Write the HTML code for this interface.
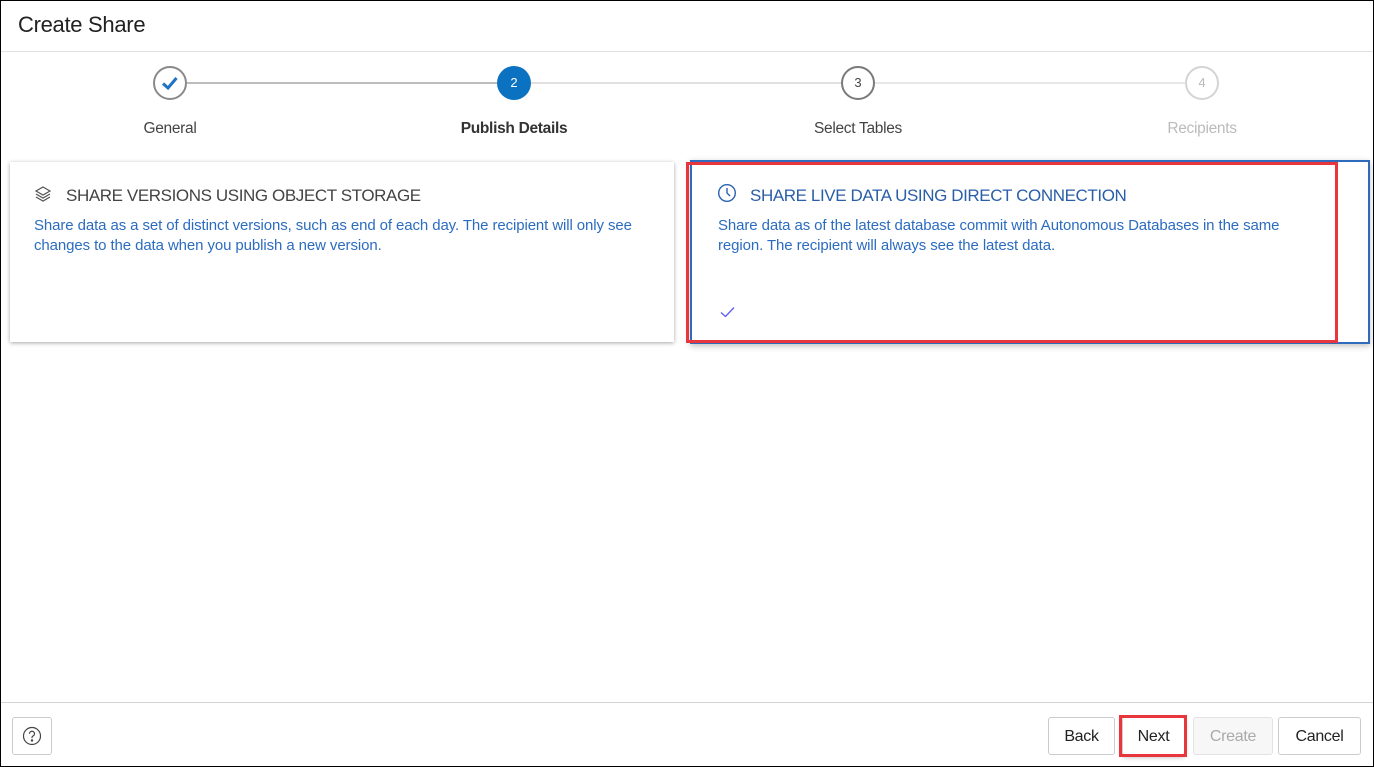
<!DOCTYPE html>
<html><head><style>
*{margin:0;padding:0;box-sizing:border-box}
body{width:1374px;height:767px;background:#fff;font-family:"Liberation Sans",sans-serif;position:relative;overflow:hidden}
.frame{position:absolute;left:0;top:0;width:1374px;height:767px;border:1px solid #000}
.abs{position:absolute}
.title{left:18px;top:12px;font-size:22px;color:#222;letter-spacing:-0.3px}
.hl{left:1px;right:1px;height:1px;background:#e2e2e2}
.line{height:2px;top:82px}
.circ{width:34px;height:34px;border-radius:50%;top:66px;text-align:center;line-height:30px;font-size:13px}
.lbl{top:120px;font-size:15.5px;width:200px;text-align:center;letter-spacing:-0.3px}
.card-t{font-size:17px;letter-spacing:-0.4px}
.card-d{font-size:15px;color:#2b6cc0;line-height:20px;letter-spacing:-0.1px;white-space:nowrap}
.btn{top:717px;height:38px;border:1px solid #ccc;border-radius:3px;background:#fff;font-size:16px;text-align:center;line-height:38px;color:#222;letter-spacing:-0.3px}
</style></head><body>
<div class="frame"></div>
<div class="abs title">Create Share</div>
<div class="abs hl" style="top:51px"></div>

<div class="abs line" style="left:187px;width:310px;background:#bdbdbd"></div>
<div class="abs line" style="left:531px;width:310px;background:#e0e0e0"></div>
<div class="abs line" style="left:875px;width:310px;background:#e8e8e8"></div>
<div class="abs circ" style="left:153px;border:2px solid #8a8a8a">
<svg width="30" height="30" viewBox="0 0 30 30"><path d="M8 15.5 L13 20 L21.5 10" fill="none" stroke="#1f73c6" stroke-width="3"/></svg></div>
<div class="abs circ" style="left:497px;background:#0b72c1;color:#fff;line-height:34px">2</div>
<div class="abs circ" style="left:841px;border:2px solid #7a7a7a;color:#444">3</div>
<div class="abs circ" style="left:1185px;border:2px solid #d4d4d4;color:#bbb">4</div>
<div class="abs lbl" style="left:70px;color:#444">General</div>
<div class="abs lbl" style="left:414px;color:#333;font-weight:bold">Publish Details</div>
<div class="abs lbl" style="left:758px;color:#444">Select Tables</div>
<div class="abs lbl" style="left:1102px;color:#bbb">Recipients</div>

<div class="abs" style="left:10px;top:162px;width:664px;height:180px;background:#fff;box-shadow:0 1px 4px rgba(0,0,0,.35)"></div>
<svg class="abs" style="left:34px;top:185px" width="18" height="18" viewBox="0 0 18 18" fill="none" stroke="#555" stroke-width="1.2"><path d="M9 2 L16 6 L9 10 L2 6Z"/><path d="M2 9 L9 13 L16 9"/><path d="M2 12 L9 16 L16 12"/></svg>
<div class="abs card-t" style="left:66px;top:186px;color:#444">SHARE VERSIONS USING OBJECT STORAGE</div>
<div class="abs card-d" style="left:34px;top:216px">Share data as a set of distinct versions, such as end of each day. The recipient will only see<br>changes to the data when you publish a new version.</div>

<div class="abs" style="left:690px;top:160px;width:680px;height:184px;border:2px solid #2f6bbd;box-shadow:0 2px 6px rgba(0,0,0,.25)"></div>
<div class="abs" style="left:686px;top:162px;width:652px;height:181px;border:3px solid #e8363c"></div>
<svg class="abs" style="left:717px;top:183px" width="20" height="20" viewBox="0 0 20 20" fill="none" stroke="#2a63b0" stroke-width="1.4"><circle cx="10" cy="10" r="8.3"/><path d="M10 5 V10 L13 13"/></svg>
<div class="abs card-t" style="left:750px;top:186px;color:#2a5ea8">SHARE LIVE DATA USING DIRECT CONNECTION</div>
<div class="abs card-d" style="left:718px;top:216px">Share data as of the latest database commit with Autonomous Databases in the same<br>region. The recipient will always see the latest data.</div>
<svg class="abs" style="left:719px;top:305px" width="18" height="14" viewBox="0 0 18 14"><path d="M2 7.5 L6.5 11.5 L15 2.5" fill="none" stroke="#5b5bf0" stroke-width="1.3"/></svg>

<div class="abs hl" style="top:702px;background:#d4d4d4"></div>
<div class="abs btn" style="left:12px;width:40px"><svg width="20" height="20" viewBox="0 0 20 20" style="margin-top:8px" fill="none" stroke="#444" stroke-width="1.2"><circle cx="10" cy="10" r="8.5"/><path d="M7.5 7.8a2.5 2.5 0 1 1 3.3 2.3c-.6.3-.8.7-.8 1.4v.6"/><circle cx="10" cy="14.5" r=".6" fill="#444"/></svg></div>
<div class="abs btn" style="left:1048px;width:67px">Back</div>
<div class="abs btn" style="left:1122px;width:63px;box-shadow:0 2px 5px rgba(0,0,0,.3)">Next</div>
<div class="abs" style="left:1119px;top:715px;width:68px;height:42px;border:3px solid #e8363c"></div>
<div class="abs btn" style="left:1193px;width:80px;background:#f7f7f7;color:#aaa;border-color:#e3e3e3">Create</div>
<div class="abs btn" style="left:1278px;width:83px">Cancel</div>
</body></html>
